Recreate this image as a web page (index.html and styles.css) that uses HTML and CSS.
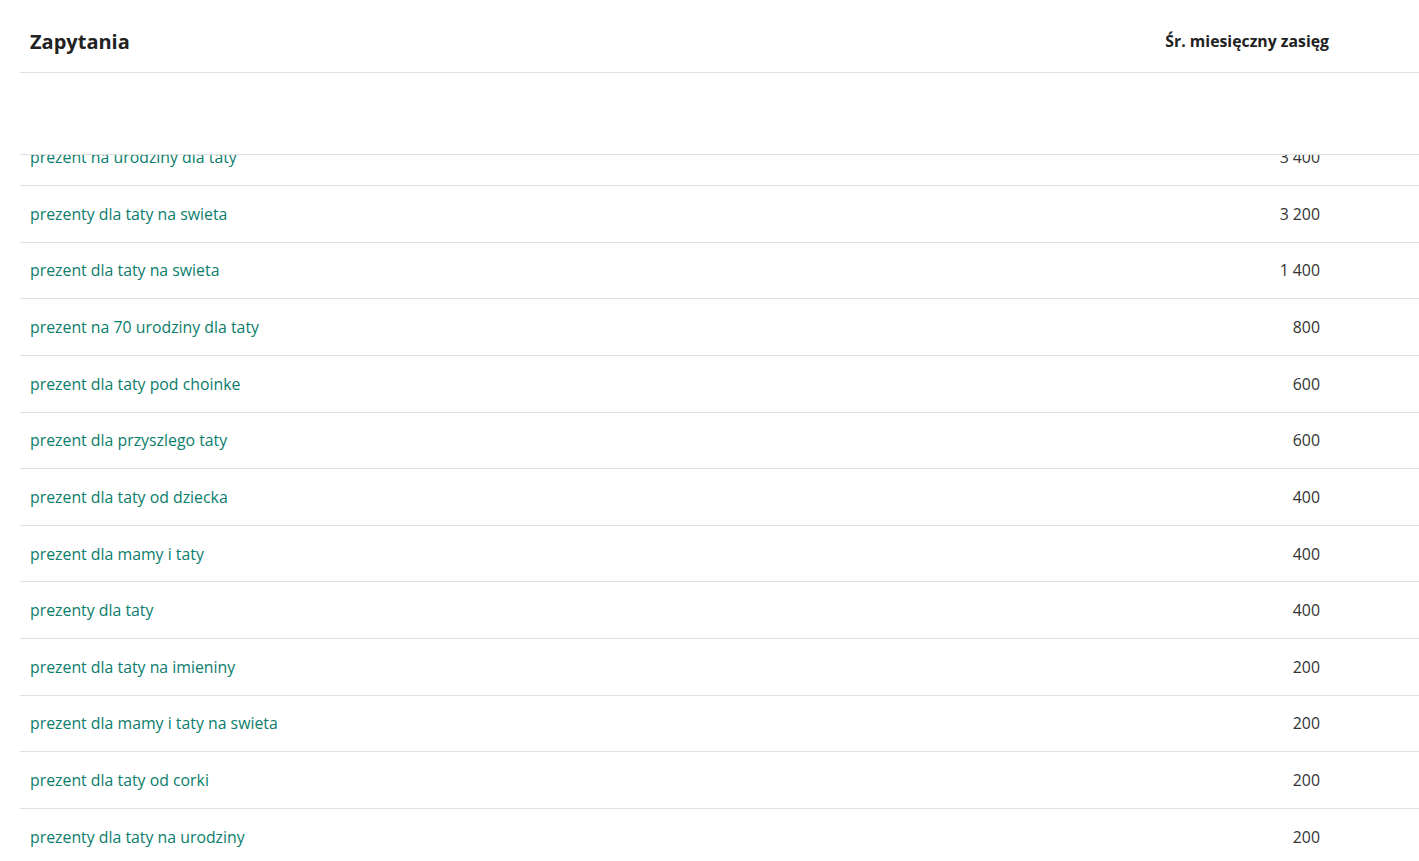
FILE: index.html
```html
<!DOCTYPE html>
<html lang="pl">
<head>
<meta charset="utf-8">
<title>Zapytania</title>
<link rel="stylesheet" href="styles.css">
</head>
<body>
<div class="table">
  <div class="head">
    <div class="head-row">
      <div class="col-name">Zapytania</div>
      <div class="col-value">Śr. miesięczny zasięg</div>
    </div>
    <div class="head-spacer"></div>
  </div>
  <div class="rows">
    <div class="row"><a class="name" href="#">prezent na urodziny dla taty</a><span class="value">3 400</span></div>
    <div class="row"><a class="name" href="#">prezenty dla taty na swieta</a><span class="value">3 200</span></div>
    <div class="row"><a class="name" href="#">prezent dla taty na swieta</a><span class="value">1 400</span></div>
    <div class="row"><a class="name" href="#">prezent na 70 urodziny dla taty</a><span class="value">800</span></div>
    <div class="row"><a class="name" href="#">prezent dla taty pod choinke</a><span class="value">600</span></div>
    <div class="row"><a class="name" href="#">prezent dla przyszlego taty</a><span class="value">600</span></div>
    <div class="row"><a class="name" href="#">prezent dla taty od dziecka</a><span class="value">400</span></div>
    <div class="row"><a class="name" href="#">prezent dla mamy i taty</a><span class="value">400</span></div>
    <div class="row"><a class="name" href="#">prezenty dla taty</a><span class="value">400</span></div>
    <div class="row"><a class="name" href="#">prezent dla taty na imieniny</a><span class="value">200</span></div>
    <div class="row"><a class="name" href="#">prezent dla mamy i taty na swieta</a><span class="value">200</span></div>
    <div class="row"><a class="name" href="#">prezent dla taty od corki</a><span class="value">200</span></div>
    <div class="row"><a class="name" href="#">prezenty dla taty na urodziny</a><span class="value">200</span></div>
  </div>
</div>
</body>
</html>
```
FILE: styles.css
```css
html, body {
  margin: 0;
  padding: 0;
  background: #fff;
  overflow: hidden;
}
body {
  font-family: "Open Sans", "Liberation Sans", sans-serif;
  color: #333;
}
.table {
  margin-left: 20px;
}
.head {
  position: relative;
  z-index: 3;
  background: #fff;
}
.head-row {
  display: flex;
  align-items: center;
  box-sizing: border-box;
  height: 73px;
  padding-top: 10px;
  border-bottom: 1px solid #e0e0e0;
  padding-left: 10px;
}
.head-row .col-name {
  flex: 1;
  font-size: 20px;
  font-weight: 700;
  color: #222;
}
.head-row .col-value {
  font-size: 15.8px;
  font-weight: 700;
  color: #222;
  padding-right: 90px;
}
.head-spacer {
  height: 81px;
  border-bottom: 1px solid #e0e0e0;
}
.rows {
  margin-top: -25.64px;
  position: relative;
  z-index: 1;
}
.row {
  display: flex;
  align-items: center;
  box-sizing: border-box;
  height: 56.636px;
  border-bottom: 1px solid #e0e0e0;
  padding-left: 10px;
  padding-right: 99px;
  font-size: 15.85px;
}
.row .name {
  flex: 1;
  color: #0b7d6c;
  text-decoration: none;
}
.row .value {
  color: #333;
  text-align: right;
}
```
